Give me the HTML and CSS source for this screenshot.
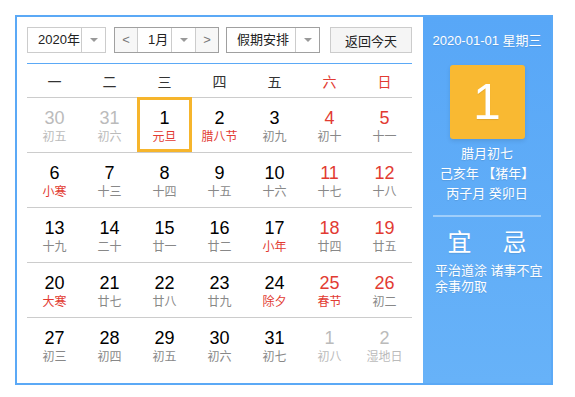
FILE: index.html
```html
<!DOCTYPE html>
<html lang="zh-CN">
<head>
<meta charset="UTF-8" />
<title>万年历</title>
<link rel="stylesheet" href="styles.css">
</head>
<body>
<div class="calendar">
  <div class="cal-main">
    <!-- Thanh điều khiển -->
    <div class="controls">
      <div class="select year-select">
        <span class="select-text">2020年</span>
        <span class="select-arrow"><i></i></span>
      </div>
      <div class="month-group">
        <span class="nav-btn">&lt;</span>
        <div class="select month-select">
          <span class="select-text">1月</span>
          <span class="select-arrow"><i></i></span>
        </div>
        <span class="nav-btn">&gt;</span>
      </div>
      <div class="select holiday-select">
        <span class="select-text">假期安排</span>
        <span class="select-arrow"><i></i></span>
      </div>
      <button class="today-btn">返回今天</button>
    </div>

    <div class="week-head">
      <span>一</span><span>二</span><span>三</span><span>四</span><span>五</span>
      <span class="weekend">六</span><span class="weekend">日</span>
    </div>

    <div class="days" id="days"></div>
  </div>

  <div class="cal-side">
    <div class="side-date">2020-01-01 星期三</div>
    <div class="side-day">1</div>
    <div class="side-line">腊月初七</div>
    <div class="side-line">己亥年 【猪年】</div>
    <div class="side-line">丙子月 癸卯日</div>
    <div class="side-divider"></div>
    <div class="yiji">
      <span>宜</span><span>忌</span>
    </div>
    <div class="side-note">平治道涂 诸事不宜<br>余事勿取</div>
  </div>
</div>

<script src="scripts.js"></script>
</body>
</html>
```

FILE: scripts.js
```js
// dữ liệu lịch tháng 1/2020
var days = [
  [30, '初五', 'other'], [31, '初六', 'other'], [1, '元旦', 'fest selected'], [2, '腊八节', 'fest'], [3, '初九', ''], [4, '初十', 'we'], [5, '十一', 'we'],
  [6, '小寒', 'fest'], [7, '十三', ''], [8, '十四', ''], [9, '十五', ''], [10, '十六', ''], [11, '十七', 'we'], [12, '十八', 'we'],
  [13, '十九', ''], [14, '二十', ''], [15, '廿一', ''], [16, '廿二', ''], [17, '小年', 'fest'], [18, '廿四', 'we'], [19, '廿五', 'we'],
  [20, '大寒', 'fest'], [21, '廿七', ''], [22, '廿八', ''], [23, '廿九', ''], [24, '除夕', 'fest'], [25, '春节', 'we fest'], [26, '初二', 'we'],
  [27, '初三', ''], [28, '初四', ''], [29, '初五', ''], [30, '初六', ''], [31, '初七', ''], [1, '初八', 'other'], [2, '湿地日', 'other']
];

var box = document.getElementById('days');
for (var r = 0; r < 5; r++) {
  var row = document.createElement('div');
  row.className = 'week-row';
  for (var c = 0; c < 7; c++) {
    var d = days[r * 7 + c];
    var cell = document.createElement('div');
    cell.className = 'day ' + d[2];
    cell.innerHTML = '<div class="day-num">' + d[0] + '</div><div class="day-lunar">' + d[1] + '</div>';
    row.appendChild(cell);
  }
  box.appendChild(row);
}
```

FILE: styles.css
```css
* {
  box-sizing: border-box;
}
body {
  margin: 0;
  padding: 15px;
  background: #fff;
  font-family: "Liberation Sans", "Noto Sans CJK SC", sans-serif;
  color: #222;
}

.calendar {
  display: flex;
  width: 538px;
  height: 370px;
  border: 2px solid #5ba9f6;
}

/* Cột trái */
.cal-main {
  width: 406px;
  padding: 10px 11px 0 10px;
}
.controls {
  display: flex;
  align-items: center;
  height: 37px;
  padding-bottom: 10px;
  border-bottom: 1px solid #5ba9f6;
}
.select {
  display: flex;
  height: 26px;
  border: 1px solid #ccc;
  font-size: 13px;
}
.select-text {
  flex: 1;
  line-height: 24px;
  padding-left: 10px;
}
.select-arrow {
  width: 24px;
  border-left: 1px solid #ccc;
  display: flex;
  align-items: center;
  justify-content: center;
}
.select-arrow i {
  width: 0;
  height: 0;
  border-left: 4px solid transparent;
  border-right: 4px solid transparent;
  border-top: 4px solid #999;
}
.year-select {
  width: 79px;
}
.year-select .select-text {
  padding-left: 10px;
}
.month-group {
  display: flex;
  height: 26px;
  margin-left: 8px;
  border: 1px solid #a0a0a0;
}
.nav-btn {
  width: 22px;
  line-height: 24px;
  text-align: center;
  font-size: 13px;
  color: #777;
  background: #f7f7f7;
}
.month-select {
  width: 59px;
  height: 24px;
  border-top: 0;
  border-bottom: 0;
}
.holiday-select {
  width: 94px;
  margin-left: 7px;
  border-color: #a0a0a0;
}
.today-btn {
  width: 82px;
  height: 26px;
  margin-left: 10px;
  padding: 0;
  border: 1px solid #ccc;
  background: #f5f5f5;
  font-family: inherit;
  font-size: 13px;
  color: #222;
}

.week-head {
  display: grid;
  grid-template-columns: repeat(7, 55px);
  height: 33px;
  align-items: center;
  text-align: center;
  font-size: 14px;
  color: #333;
}
.week-head .weekend {
  color: #e23b32;
}

.week-row {
  display: grid;
  grid-template-columns: repeat(7, 55px);
  height: 55px;
  border-top: 1px solid #ccc;
}
.day {
  position: relative;
  text-align: center;
  padding-top: 10px;
}
.day-num {
  font-size: 18px;
  line-height: 20px;
  color: #000;
}
.day-lunar {
  margin-top: 1px;
  font-size: 12px;
  line-height: 16px;
  color: #888;
}
.day.we .day-num {
  color: #e23b32;
}
.day.fest .day-lunar {
  color: #e23b32;
}
.day.other .day-num,
.day.other .day-lunar {
  color: #bbb;
}
.day.selected::after {
  content: "";
  position: absolute;
  top: -1px;
  left: 0;
  right: 0;
  bottom: 0;
  border: 3px solid #f6b52c;
}

/* Cột phải */
.cal-side {
  width: 130px;
  padding-top: 16px;
  background: linear-gradient(180deg, #58a7f7, #67b2f8);
  color: #fff;
  text-align: center;
  font-size: 13px;
  text-shadow: 0 1px 1px rgba(0, 0, 0, 0.1);
}
.side-date {
  line-height: 16px;
}
.side-day {
  width: 75px;
  height: 74px;
  margin: 16px auto 5px;
  border-radius: 3px;
  background: #f9b932;
  font-size: 50px;
  line-height: 74px;
  box-shadow: 0 2px 4px rgba(0, 0, 0, 0.1);
}
.side-line {
  line-height: 20px;
}
.side-divider {
  height: 2px;
  margin: 11px 10px 0;
  background: rgba(255, 255, 255, 0.4);
}
.yiji {
  display: flex;
  justify-content: center;
  gap: 31px;
  margin-top: 11px;
  font-size: 24px;
  line-height: 30px;
}
.side-note {
  margin-top: 5px;
  padding-left: 12px;
  text-align: left;
  line-height: 16px;
}
```
